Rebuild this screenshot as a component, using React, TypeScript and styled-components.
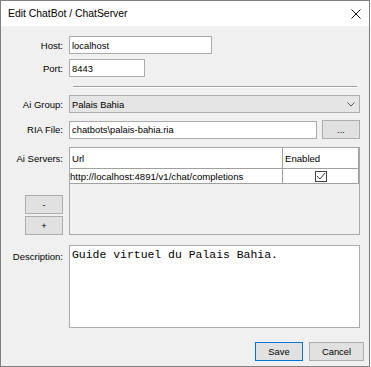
import React from 'react';
import styled, { createGlobalStyle } from 'styled-components';

const Global = createGlobalStyle`
  html, body { margin: 0; padding: 0; background: #ffffff; }
  body { font-family: "Liberation Sans", Arial, sans-serif; color: #000; }
  * { box-sizing: border-box; }
`;

const Window = styled.div`
  width: 370px;
  height: 367px;
  border: 1px solid #7f7f7f;
  display: flex;
  flex-direction: column;
  background: #f0f0f0;
`;

const TitleBar = styled.div`
  height: 25px;
  flex: none;
  background: #ffffff;
  display: flex;
  align-items: center;
  justify-content: space-between;
  padding: 0 7px 0 7px;
  font-size: 10.4px;
`;

const Body = styled.div`
  flex: 1;
  display: flex;
  flex-direction: column;
  padding: 10px 9px 0 0;
`;

const Row = styled.div<{ $mt?: number; $h?: number }>`
  display: grid;
  grid-template-columns: 62px 1fr;
  column-gap: 6px;
  margin-top: ${p => p.$mt ?? 0}px;
  height: ${p => (p.$h ? `${p.$h}px` : 'auto')};
`;

const Label = styled.div<{ $top?: boolean }>`
  font-size: 9.5px;
  text-align: right;
  align-self: ${p => (p.$top ? 'start' : 'center')};
  padding-top: ${p => (p.$top ? '6px' : '0')};
  white-space: nowrap;
`;

const SideLabel = styled.div`
  font-size: 9.5px;
  text-align: right;
  padding-top: 6px;
  white-space: nowrap;
`;

const TextBox = styled.input<{ $w?: number }>`
  width: ${p => (p.$w ? `${p.$w}px` : '100%')};
  height: 18px;
  border: 1px solid #ababab;
  background: #ffffff;
  padding: 0 0 0 2px;
  font-family: "Liberation Sans", Arial, sans-serif;
  font-size: 9.4px;
  color: #000;
  outline: none;
  margin: 0;
`;

const FieldLine = styled.div`
  display: flex;
  gap: 5px;
  align-items: center;
`;

const Separator = styled.div`
  margin: 9px 3px 0 72px;
  height: 2px;
  border-top: 1px solid #a0a0a0;
  border-bottom: 1px solid #ffffff;
`;

const Combo = styled.div`
  height: 18px;
  border: 1px solid #adadad;
  background: #e5e5e5;
  display: flex;
  align-items: center;
  justify-content: space-between;
  padding: 0 4px 0 2px;
  font-size: 9.4px;
`;

const Button = styled.button<{ $w: number; $default?: boolean }>`
  width: ${p => p.$w}px;
  height: 19px;
  flex: none;
  border: 1px solid ${p => (p.$default ? '#0078d7' : '#adadad')};
  background: #e1e1e1;
  font-family: "Liberation Sans", Arial, sans-serif;
  font-size: 9.4px;
  color: #000;
  padding: 0;
  margin: 0;
  display: flex;
  align-items: center;
  justify-content: center;
`;

const SideColumn = styled.div`
  display: flex;
  flex-direction: column;
  align-items: flex-end;
  justify-content: space-between;
`;

const SideButtons = styled.div`
  display: flex;
  flex-direction: column;
  gap: 2px;
`;

const Table = styled.div`
  height: 88px;
  border: 1px solid #a8a8a8;
  background: #f0f0f0;
  display: flex;
  flex-direction: column;
`;

const TableRow = styled.div<{ $h: number }>`
  display: grid;
  grid-template-columns: 213px 1fr;
  height: ${p => p.$h}px;
  border-bottom: 1px solid #a0a0a0;
  border-right: 1px solid #a0a0a0;
  background: #ffffff;
`;

const Cell = styled.div<{ $center?: boolean; $sep?: boolean; $header?: boolean }>`
  display: flex;
  align-items: center;
  justify-content: ${p => (p.$center ? 'center' : 'flex-start')};
  padding-left: ${p => (p.$center ? 0 : p.$header ? 2 : 0)}px;
  border-right: ${p => (p.$sep ? '1px solid #a0a0a0' : 'none')};
  font-size: 9.6px;
  white-space: nowrap;
  overflow: hidden;
`;

const Check = styled.span`
  width: 12px;
  height: 11px;
  border: 1px solid #444444;
  background: #ffffff;
  display: flex;
  align-items: center;
  justify-content: center;
`;

const TextArea = styled.textarea`
  height: 83px;
  width: 100%;
  resize: none;
  border: 1px solid #ababab;
  background: #ffffff;
  padding: 2px 2px;
  margin: 0;
  font-family: "Liberation Mono", "Courier New", monospace;
  font-size: 11.45px;
  line-height: 13px;
  color: #000;
  outline: none;
`;

const Footer = styled.div`
  display: flex;
  justify-content: flex-end;
  gap: 6px;
  margin: 14px -4px 0 0;
`;

export default function App() {
  return (
    <>
      <Global />
      <Window>
        <TitleBar>
          <span>Edit ChatBot / ChatServer</span>
          <svg width="10" height="10" viewBox="0 0 10 10" style={{ marginRight: 1 }}>
            <path d="M0.5 0.5 L9.5 9.5 M9.5 0.5 L0.5 9.5" stroke="#111" strokeWidth="1" fill="none" />
          </svg>
        </TitleBar>
        <Body>
          <Row $h={18}>
            <Label>Host:</Label>
            <TextBox $w={143} readOnly defaultValue="localhost" />
          </Row>
          <Row $mt={5} $h={18}>
            <Label>Port:</Label>
            <TextBox $w={76} readOnly defaultValue="8443" />
          </Row>
          <Separator />
          <Row $mt={7} $h={18}>
            <Label>Ai Group:</Label>
            <Combo>
              <span>Palais Bahia</span>
              <svg width="8" height="5" viewBox="0 0 8 5">
                <path d="M0.5 0.5 L4 4 L7.5 0.5" stroke="#555" strokeWidth="1" fill="none" />
              </svg>
            </Combo>
          </Row>
          <Row $mt={7} $h={18}>
            <Label>RIA File:</Label>
            <FieldLine>
              <TextBox $w={248} readOnly defaultValue="chatbots\palais-bahia.ria" />
              <Button $w={38}>...</Button>
            </FieldLine>
          </Row>
          <Row $mt={9} $h={88}>
            <SideColumn>
              <SideLabel>Ai Servers:</SideLabel>
              <SideButtons>
                <Button $w={38}>-</Button>
                <Button $w={38}>+</Button>
              </SideButtons>
            </SideColumn>
            <Table>
              <TableRow $h={21}>
                <Cell $sep $header>Url</Cell>
                <Cell $header>Enabled</Cell>
              </TableRow>
              <TableRow $h={15}>
                <Cell $sep>http://localhost:4891/v1/chat/completions</Cell>
                <Cell $center>
                  <Check>
                    <svg width="10" height="9" viewBox="0 0 10 9">
                      <path d="M1 4 L4 7 L9 1" stroke="#333" strokeWidth="1" fill="none" />
                    </svg>
                  </Check>
                </Cell>
              </TableRow>
            </Table>
          </Row>
          <Row $mt={10} $h={83}>
            <Label $top>Description:</Label>
            <TextArea readOnly defaultValue="Guide virtuel du Palais Bahia." />
          </Row>
          <Footer>
            <Button $w={48} $default>Save</Button>
            <Button $w={55}>Cancel</Button>
          </Footer>
        </Body>
      </Window>
    </>
  );
}
